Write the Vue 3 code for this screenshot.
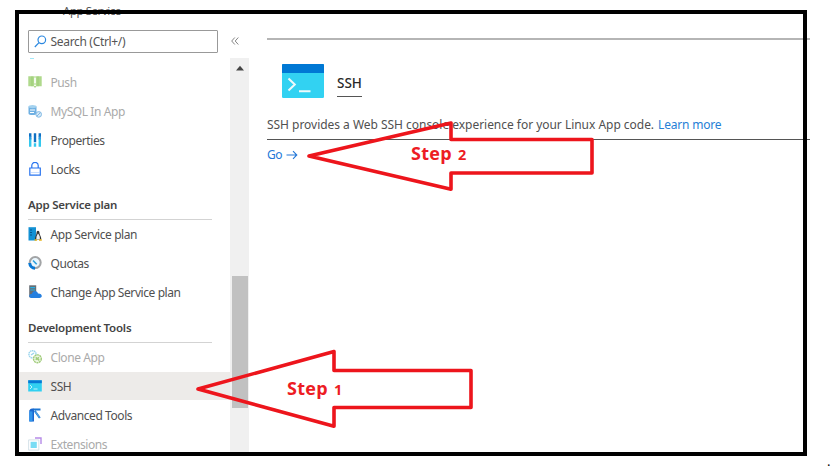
<script setup>
const groups = [
  {
    title: '',
    items: [
      { label: 'Push', icon: 'push', muted: true },
      { label: 'MySQL In App', icon: 'mysql', muted: true },
      { label: 'Properties', icon: 'props' },
      { label: 'Locks', icon: 'lock' },
    ],
  },
  {
    title: 'App Service plan',
    items: [
      { label: 'App Service plan', icon: 'plan' },
      { label: 'Quotas', icon: 'quota' },
      { label: 'Change App Service plan', icon: 'change' },
    ],
  },
  {
    title: 'Development Tools',
    items: [
      { label: 'Clone App', icon: 'clone', muted: true },
      { label: 'SSH', icon: 'ssh', active: true },
      { label: 'Advanced Tools', icon: 'tools' },
      { label: 'Extensions', icon: 'ext', muted: true },
    ],
  },
]
</script>

<template>
  <div class="page">
    <div class="crumb">App Service</div>
    <div class="panel">
      <aside class="side">
        <div class="search">
          <svg width="13" height="13" viewBox="0 0 13 13" fill="none" stroke="#2b88e0" stroke-width="1.2"><circle cx="7.8" cy="4.8" r="3.8" /><path d="M5 7.6L.8 12" /></svg>
          <span>Search (Ctrl+/)</span>
        </div>
        <div class="sliver"></div>
        <nav>
          <section v-for="(g, i) in groups" :key="i">
            <h2 v-if="g.title"><span>{{ g.title }}</span></h2>
            <div v-for="it in g.items" :key="it.label" class="item" :class="{ muted: it.muted, active: it.active }">
              <svg class="icon" width="14" height="14" viewBox="0 0 14 14" fill="none">
                <g v-if="it.icon === 'push'">
                  <path d="M.3 1.3h6.2l.5.8.5-.8h6.2v10H8.6L7 13l-1.4-1.7H.3z" fill="#afd98c" />
                  <path d="M7 2.4v6M7 9.5v1.6" stroke="#fff" stroke-width="1.7" /><path d="M4 1.3v10M10 1.3v10" stroke="#94c76c" stroke-width=".7" />
                </g>
                <g v-else-if="it.icon === 'mysql'">
                  <path d="M.5 2.5v7c0 2 8 2 8 0v-7" fill="#6fb0e2" /><ellipse cx="4.5" cy="2.6" rx="4" ry="1.7" fill="#a4d2ef" />
                  <path d="M2 6h5M2 8.5h4" stroke="#fff" /><circle cx="10.7" cy="10.4" r="2.8" fill="#d4e9f8" stroke="#83b9e4" /><path d="M9 12l3.5-3.5" stroke="#83b9e4" />
                </g>
                <g v-else-if="it.icon === 'props'" stroke-width="2.4">
                  <path d="M2.2.2v4M7 .2v9M11.8.2v4" stroke="#0f70c4" /><path d="M2.2 5v8.8M7 10.3v3.5M11.8 5v8.8" stroke="#32c8ee" /><path d="M2.2 3.4v3M11.8 3.4v3" stroke="#329be0" />
                </g>
                <g v-else-if="it.icon === 'lock'" stroke="#2874ef" stroke-width="1.2">
                  <path d="M1.8 6h10.5v7.2H1.8zM3.8 6V3.6a3.2 3.2 0 0 1 6.4 0V6" /><path d="M2 10.5h10" stroke="#a6c8fb" stroke-width=".6" />
                </g>
                <g v-else-if="it.icon === 'plan'">
                  <path d="M.5.2h7.5v13.3H.5z" fill="#1391d4" /><path d="M2 3h2M2 5.5h2M2 8h2" stroke="#075791" />
                  <path d="M8.5 6c0-3 3-3 3 0 0 2 1.8 3 1.8 6.5H7C7 9 8.5 8 8.5 6z" fill="#333" /><path d="M10 6.5c2 2 2 4 1.8 5.8H8.3c0-2 .2-4 1.7-5.8z" fill="#eee" /><path d="M6.5 12.9h2.6M11 12.9h2.8" stroke="#e8b51c" stroke-width="1.5" />
                </g>
                <g v-else-if="it.icon === 'quota'">
                  <circle cx="7.2" cy="6.6" r="5.5" stroke="#a2a4a6" stroke-width="2" fill="#eaf6fd" /><path d="M1.7 7a5.5 5.5 0 0 0 5.3 5.2" stroke="#0878d4" stroke-width="3" /><path d="M5 4.5L8.7 8.3" stroke="#2d9edb" stroke-width="1.6" />
                </g>
                <g v-else-if="it.icon === 'change'">
                  <path d="M1.2.3h7v12h-7z" fill="#686e75" /><path d="M2.3 2.6h4.8M2.3 5h4.8" stroke="#23b1e8" stroke-width="1.2" />
                  <path d="M4.2 13c-4 0-3.6-4.2-.3-4.2C5 4.8 9.4 5.6 10 8.5c4.6-.3 4.9 4.5 1.5 4.5z" fill="#257fdf" />
                </g>
                <g v-else-if="it.icon === 'clone'" stroke-width="1.4">
                  <circle cx="4.5" cy="4.3" r="3.6" stroke="#99d4ed" stroke-dasharray="1.5 .5" /><path d="M3 5l3-2" stroke="#99d4ed" /><circle cx="9.4" cy="8.8" r="3.9" stroke="#a1cc7b" fill="#edf6e5" stroke-dasharray="2 .5" /><path d="M7.7 7.4l3.6 3M7.7 9.8l3.3-2.4" stroke="#a1cc7b" />
                </g>
                <g v-else-if="it.icon === 'ssh'">
                  <path d="M.2 1.3h13.6v11.2H.2z" fill="#31d0f1" /><path d="M.2 1.3h13.6v2.9H.2z" fill="#0878d4" /><path d="M2 6l2 2-2 2M5.5 10h4" stroke="#c1f4fc" />
                </g>
                <g v-else-if="it.icon === 'tools'">
                  <path d="M1.3 2.6Q2.2.6 4 .6h2v12.8H1.3z" fill="#1a66cf" /><path d="M1.3 3.4h3.2v10H1.3z" fill="#3195eb" /><path d="M5.5 1.6h7M6.8 3l5 7" stroke="#1a75d3" stroke-width="2" /><path d="M7.5 3.6l4.2 6" stroke="#4d9fe5" stroke-width="1.5" />
                </g>
                <g v-else>
                  <path d="M.6 2.9h10.2v10.2H.6z" stroke="#ccdbe2" stroke-width=".8" /><path d="M2.6 4.8h6.2V11H2.6z" fill="#79dcf4" /><path d="M7 1h6v6" stroke="#b68be7" stroke-width="1.4" />
                </g>
              </svg>
              <span>{{ it.label }}</span>
            </div>
          </section>
        </nav>
      </aside>
      <div class="rail">
        <svg class="collapse" width="8" height="8" viewBox="0 0 8 8" fill="none" stroke="#777" stroke-width=".9"><path d="M3.8.5L.7 4l3.1 3.5M7.3.5L4.2 4l3.1 3.5" /></svg>
        <div class="track">
          <svg width="10" height="6" viewBox="0 0 10 6"><path d="M1 5.5L5 .8l4 4.7z" fill="#444" /></svg>
          <div class="thumb"></div>
        </div>
      </div>
      <main>
        <div class="rule top"></div>
        <header>
          <svg width="42" height="34" viewBox="0 0 42 34" fill="none"><rect width="42" height="34" rx="1.2" fill="#32d2f2" /><path d="M1 0h40q1 0 1 1v8H0V1q0-1 1-1z" fill="#0078d4" /><path d="M6.5 14.5l6.3 6-6.3 6M17 27.2h11.5" stroke="#eefafb" stroke-width="2" /></svg>
          <h1>SSH</h1>
        </header>
        <p><span class="desc">SSH provides a Web SSH console experience for your Linux App code.</span><a>Learn more</a></p>
        <div class="rule"></div>
        <div class="go"><span>Go</span><svg width="12" height="10" viewBox="0 0 12 10" fill="none" stroke="#2478d8" stroke-width="1.1"><path d="M.5 5h10.3M7 1.2L10.8 5 7 8.8" /></svg></div>
      </main>
    </div>
    <div class="frame"></div>
    <svg class="arrows" width="831" height="470" viewBox="0 0 831 470" fill="none" stroke="#ed151c" stroke-width="3.6" stroke-linejoin="round">
      <path d="M451 123v16.5h141V173H451v16.3L309 156z" />
      <path d="M334 351.5v19H471v37H334v18.7L198 389z" />
    </svg>
    <div class="step two">Step <small>2</small></div>
    <div class="step one">Step <small>1</small></div>
    <span class="dot">.</span>
  </div>
</template>

<style>
body { background: #fff; overflow: hidden; }
</style>

<style scoped>
* { box-sizing: border-box; }
.page { position: relative; width: 831px; height: 470px; overflow: hidden; background: #fff; font-family: "Noto Sans", sans-serif; font-size: 12px; color: #505050; }
.crumb { position: absolute; left: 63px; top: 3px; line-height: 16px; font-size: 11.5px; letter-spacing: -.45px; white-space: nowrap; color: #555; }
.panel { display: flex; height: 453px; padding: 14px 0 0 19px; }
.side { width: 211px; overflow: hidden; }
.search { display: flex; align-items: center; gap: 3.5px; width: 190px; height: 23px; margin: 16px 0 0 9px; padding-left: 5px; border: 1px solid #999; border-radius: 1px; color: #555; }
.search span { letter-spacing: -.32px; }
.sliver { width: 4px; height: 1px; margin: 5px 0 9px 11px; background: #a2e8f8; }
.item { display: flex; align-items: center; gap: 8.5px; height: 28.9px; padding-left: 9px; letter-spacing: -.42px; }
.item span { padding-top: 1px; }
.icon { flex: none; }
.muted { color: #aaa; }
.active { background: #edebe9; }
h2 { display: flex; align-items: flex-end; width: 184px; height: 36.2px; margin: 0 0 0 9px; padding-bottom: 6px; border-bottom: 1px solid #d3d3d3; font-size: 11.5px; line-height: 16px; font-weight: 600; letter-spacing: -.22px; color: #444; }
.rail { display: flex; flex-direction: column; width: 19px; }
.collapse { margin: 23px 0 13px 1px; }
.track { display: flex; flex: 1; flex-direction: column; align-items: center; padding-top: 7px; background: #f0f0f0; }
.thumb { width: 16px; height: 132px; margin-top: 205px; background: #c1c1c1; }
main { width: 543px; margin-left: 18px; padding-top: 24px; }
.rule { height: 1px; background: #555; }
.rule.top { height: 2px; background: #b5b5b5; }
header { display: flex; align-items: flex-start; gap: 13px; padding: 24px 0 0 15px; }
h1 { height: 33px; margin: 0; padding: 8px 0 0; border-bottom: 1px solid #555; font-size: 13.5px; line-height: 22px; font-weight: 500; letter-spacing: 0; color: #292929; }
p { display: flex; gap: 4px; margin: 17px 0 4px; line-height: 20px; white-space: nowrap; }
.desc { letter-spacing: -.03px; }
a { color: #2680d6; letter-spacing: -.2px; }
.go { display: flex; align-items: center; gap: 4px; height: 29px; letter-spacing: -.5px; color: #2478d8; }
.frame { position: absolute; left: 15px; top: 10px; width: 792px; height: 446px; border: 4px solid #000; }
.arrows { position: absolute; left: 0; top: 0; }
.step { position: absolute; font-family: "Open Sans", sans-serif; font-size: 18px; line-height: 24px; font-weight: 700; letter-spacing: .3px; color: #ed1c24; white-space: pre; }
.step small { margin-left: 1px; font-size: 14.5px; }
.two { left: 411px; top: 141px; }
.one { left: 287px; top: 376px; }
.dot { position: absolute; left: 827px; top: 454px; font: 14px "Liberation Serif", serif; color: #000; }
</style>
